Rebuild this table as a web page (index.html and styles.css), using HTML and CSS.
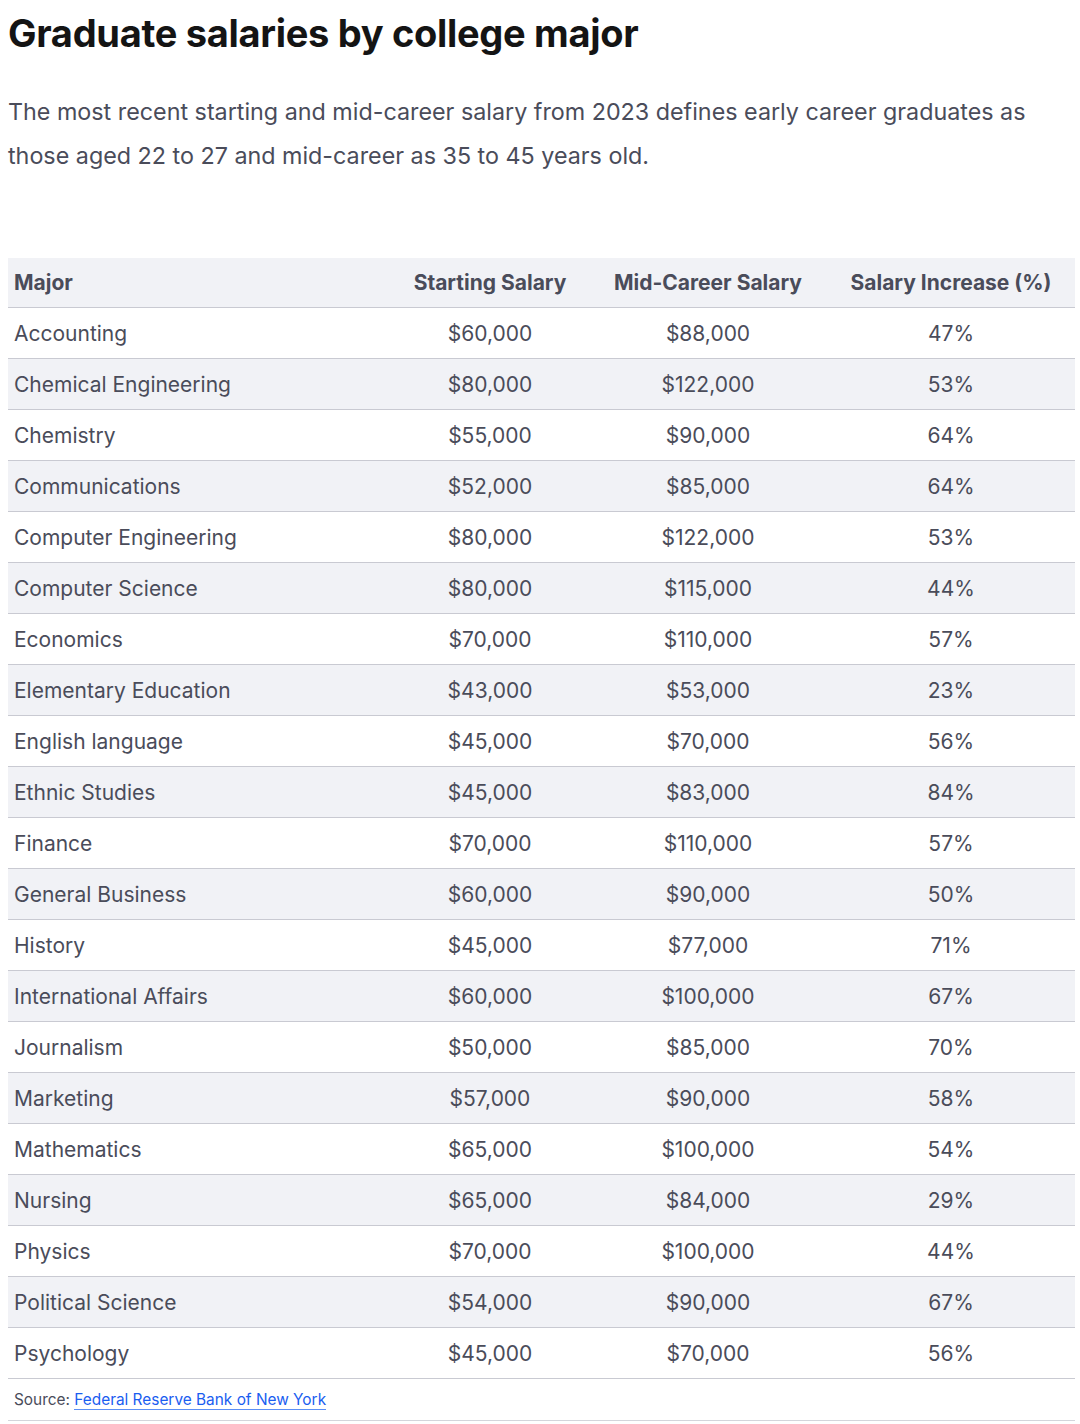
FILE: index.html
```html
<!DOCTYPE html>
<html lang="en">
<head>
<meta charset="utf-8">
<title>Graduate salaries by college major</title>
<link rel="stylesheet" href="styles.css">
</head>
<body>
<main class="page">
  <h1 class="title">Graduate salaries by college major</h1>
  <p class="intro">The most recent starting and mid-career salary from 2023 defines early career graduates as those aged 22 to 27 and mid-career as 35 to 45 years old.</p>
  <table class="salaries">
    <colgroup>
      <col class="c-major"><col class="c-start"><col class="c-mid"><col class="c-inc">
    </colgroup>
    <thead>
      <tr><th class="left">Major</th><th>Starting Salary</th><th>Mid-Career Salary</th><th>Salary Increase (%)</th></tr>
    </thead>
    <tbody>
      <tr><td class="left">Accounting</td><td>$60,000</td><td>$88,000</td><td>47%</td></tr>
      <tr><td class="left">Chemical Engineering</td><td>$80,000</td><td>$122,000</td><td>53%</td></tr>
      <tr><td class="left">Chemistry</td><td>$55,000</td><td>$90,000</td><td>64%</td></tr>
      <tr><td class="left">Communications</td><td>$52,000</td><td>$85,000</td><td>64%</td></tr>
      <tr><td class="left">Computer Engineering</td><td>$80,000</td><td>$122,000</td><td>53%</td></tr>
      <tr><td class="left">Computer Science</td><td>$80,000</td><td>$115,000</td><td>44%</td></tr>
      <tr><td class="left">Economics</td><td>$70,000</td><td>$110,000</td><td>57%</td></tr>
      <tr><td class="left">Elementary Education</td><td>$43,000</td><td>$53,000</td><td>23%</td></tr>
      <tr><td class="left">English language</td><td>$45,000</td><td>$70,000</td><td>56%</td></tr>
      <tr><td class="left">Ethnic Studies</td><td>$45,000</td><td>$83,000</td><td>84%</td></tr>
      <tr><td class="left">Finance</td><td>$70,000</td><td>$110,000</td><td>57%</td></tr>
      <tr><td class="left">General Business</td><td>$60,000</td><td>$90,000</td><td>50%</td></tr>
      <tr><td class="left">History</td><td>$45,000</td><td>$77,000</td><td>71%</td></tr>
      <tr><td class="left">International Affairs</td><td>$60,000</td><td>$100,000</td><td>67%</td></tr>
      <tr><td class="left">Journalism</td><td>$50,000</td><td>$85,000</td><td>70%</td></tr>
      <tr><td class="left">Marketing</td><td>$57,000</td><td>$90,000</td><td>58%</td></tr>
      <tr><td class="left">Mathematics</td><td>$65,000</td><td>$100,000</td><td>54%</td></tr>
      <tr><td class="left">Nursing</td><td>$65,000</td><td>$84,000</td><td>29%</td></tr>
      <tr><td class="left">Physics</td><td>$70,000</td><td>$100,000</td><td>44%</td></tr>
      <tr><td class="left">Political Science</td><td>$54,000</td><td>$90,000</td><td>67%</td></tr>
      <tr><td class="left">Psychology</td><td>$45,000</td><td>$70,000</td><td>56%</td></tr>
    </tbody>
    <tfoot>
      <tr><td class="source" colspan="4">Source: <a href="#">Federal Reserve Bank of New York</a></td></tr>
    </tfoot>
  </table>
</main>
</body>
</html>
```

FILE: styles.css
```css
html, body {
  margin: 0;
  padding: 0;
  background: #ffffff;
}

body {
  font-family: Inter, "Noto Sans", "Liberation Sans", sans-serif;
  color: #4a4c5a;
}

.page {
  padding: 8px 5px 0 8px;
}

.title {
  margin: 0;
  font-size: 38px;
  line-height: 50px;
  font-weight: 700;
  color: #141414;
  letter-spacing: -0.3px;
}

.intro {
  margin: 32px 0 0 0;
  font-size: 23.3px;
  line-height: 44px;
  color: #4a4c5a;
  padding-right: 20px;
}

.salaries {
  margin-top: 80px;
  width: 100%;
  border-collapse: collapse;
  table-layout: fixed;
  font-size: 21px;
}

.c-major { width: 383px; }
.c-start { width: 198px; }
.c-mid { width: 238px; }
.c-inc { width: auto; }

.salaries th,
.salaries td {
  text-align: center;
  padding: 0 6px;
  height: 50px;
  border-bottom: 1px solid #c9cad2;
  color: #4a4c5a;
}

.salaries th {
  font-weight: 700;
  background: #f1f2f6;
  height: 49px;
}

.salaries .left {
  text-align: left;
}

.salaries tbody tr:nth-child(even) td {
  background: #f1f2f6;
}

.salaries .source {
  text-align: left;
  font-size: 15.4px;
  height: 41px;
  border-bottom: 1px solid #d4d5db;
}

.source a {
  color: #1a5df0;
  text-decoration: none;
  border-bottom: 1px solid #5b8ef5;
}
```
